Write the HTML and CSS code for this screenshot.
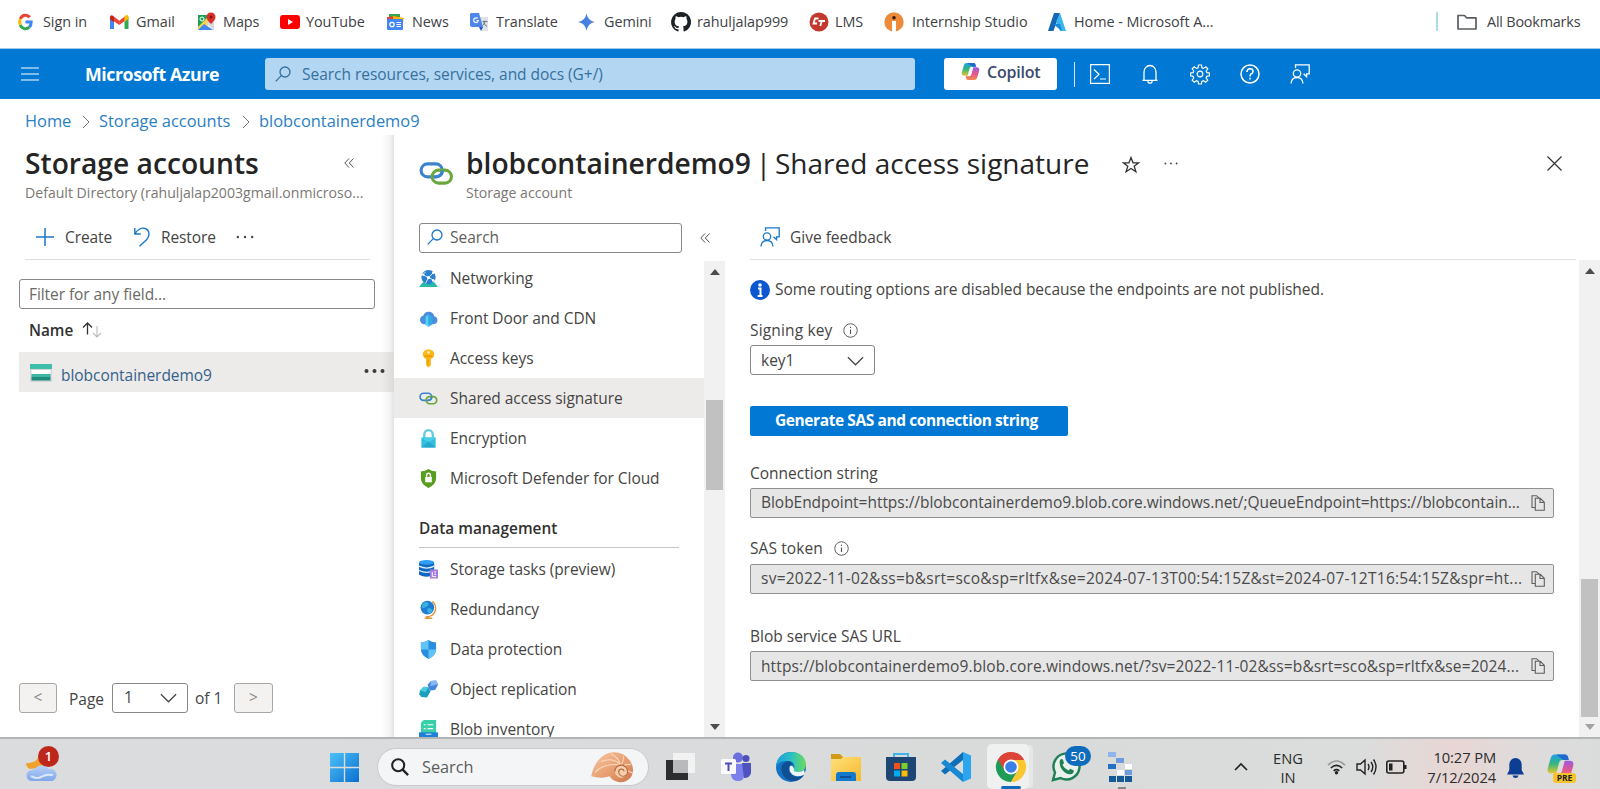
FILE: index.html
```html
<!DOCTYPE html>
<html lang="en">
<head>
<meta charset="utf-8">
<title>blobcontainerdemo9 - Microsoft Azure</title>
<link rel="stylesheet" href="styles.css">
</head>
<body>
<svg class="defs" width="0" height="0" aria-hidden="true">
  <defs>
    <linearGradient id="gBlue" x1="0" y1="0" x2="1" y2="1"><stop offset="0" stop-color="#4cc2f7"/><stop offset="1" stop-color="#0a6fd0"/></linearGradient>
    <linearGradient id="gCopA" x1="0" y1="0" x2="0" y2="1"><stop offset="0" stop-color="#1c9fe8"/><stop offset=".5" stop-color="#35b77c"/><stop offset="1" stop-color="#e8c62c"/></linearGradient>
    <linearGradient id="gCopB" x1="0" y1="0" x2="0" y2="1"><stop offset="0" stop-color="#9a5be0"/><stop offset=".5" stop-color="#e4568f"/><stop offset="1" stop-color="#f58a4a"/></linearGradient>
    <linearGradient id="gGem" x1="0" y1="0" x2="1" y2="0"><stop offset="0" stop-color="#4a80d8"/><stop offset=".6" stop-color="#3f83e0"/><stop offset="1" stop-color="#8e7bc4"/></linearGradient>
    <linearGradient id="gEdge" x1="0" y1="0" x2="1" y2="0"><stop offset="0" stop-color="#1b9fd9"/><stop offset=".5" stop-color="#2bbfc4"/><stop offset="1" stop-color="#6bdc5b"/></linearGradient>
    <linearGradient id="gShell" x1="0" y1="0" x2="1" y2="1"><stop offset="0" stop-color="#f8c9a4"/><stop offset=".6" stop-color="#e59a6c"/><stop offset="1" stop-color="#c9744a"/></linearGradient>
    <linearGradient id="gFolder" x1="0" y1="0" x2="1" y2="1"><stop offset="0" stop-color="#ffe07a"/><stop offset="1" stop-color="#f6b92e"/></linearGradient>
    <linearGradient id="gCloud" x1="0" y1="0" x2="0" y2="1"><stop offset="0" stop-color="#b9d3f8"/><stop offset="1" stop-color="#7fa6ea"/></linearGradient>
    <symbol id="person" viewBox="0 0 20 20">
      <g fill="none" stroke="currentColor" stroke-width="1.3"><circle cx="7" cy="9.500" r="3.700"/><path d="M1 19.500c.3-3.800 2.700-6 6-6s5.700 2.200 6 6M5.500 4V.8h13.700v9h-2.600v3l-3-3"/></g>
    </symbol>
    <symbol id="lens" viewBox="0 0 16 16"><g fill="none" stroke="currentColor" stroke-width="1.300"><circle cx="10" cy="6" r="5"/><path d="M6.300 9.600.7 15.400"/></g></symbol>
    <symbol id="links" viewBox="0 0 36 26"><rect x="2" y="3" width="22" height="13.500" rx="6.700" fill="none" stroke="#3b82d0" stroke-width="3.200"/><rect x="13.500" y="9.500" width="20" height="13.500" rx="6.700" fill="none" stroke="#69a63c" stroke-width="3.200"/><path d="M17 16.500q7-.3 7-6.700" fill="none" stroke="#3b82d0" stroke-width="3.200"/></symbol>
    <symbol id="chev" viewBox="0 0 18 10"><path d="M1 1l8 8 8-8" fill="none" stroke="currentColor" stroke-width="1.300"/></symbol>
    <symbol id="dbl" viewBox="0 0 10 10"><path d="M5 .5.800 5 5 9.500M9.500.5 5.300 5l4.200 4.500" fill="none" stroke="currentColor"/></symbol>
    <symbol id="info" viewBox="0 0 16 16"><circle cx="8" cy="8" r="7.200" fill="none" stroke="currentColor"/><path d="M8 6.800v5M8 4v1.400" stroke="currentColor" stroke-width="1.200"/></symbol>
    <symbol id="copy" viewBox="0 0 14 16"><path d="M4 12.500H1V.7h4.500l2.700 2.500M4.300 3.300h5l4 4v8h-9zM9 3.500v4h4.300" fill="none" stroke="currentColor" stroke-width="1.100"/></symbol>
    <symbol id="copilot" viewBox="0 0 20 20"><path d="M6 1h7q1.500 0 2 1.800l.6 2.200H11q-1.500 0-2 2L7 14.500H3.500Q0 14.500 1 10.500L3 3.500Q3.800 1 6 1z" fill="url(#gCopA)"/><path d="M7 1h6.500q1.300 0 1.800 1.500l.7 2.500h-4z" fill="#2068cf"/><path d="M13 5.500h3.500Q20 5.500 19 9.500l-2 7q-.8 2.500-3 2.500H7.500Q6 19 5.400 17l-.7-2H9q1.500 0 2-2z" fill="url(#gCopB)"/></symbol>
    <symbol id="dots" viewBox="0 0 20 4"><g fill="currentColor"><circle cx="2" cy="2" r="1.300"/><circle cx="10" cy="2" r="1.300"/><circle cx="18" cy="2" r="1.300"/></g></symbol>
  </defs>
</svg>

<nav class="bookmarks">
  <a class="bm"><svg viewBox="0 0 20 20"><g fill="none" stroke-width="3"><path d="M12.800 5.200A5.800 6.500 0 0 0 3.300 7" stroke="#ea4335"/><path d="M3.300 7a7 7 0 0 0 0 6" stroke="#fbbc05"/><path d="M3.300 13a5.800 6.500 0 0 0 9 2.200" stroke="#34a853"/><path d="M12.300 15.200Q14.200 13.500 14.200 10H8.500" stroke="#4285f4"/></g></svg><span>Sign in</span></a>
  <a class="bm"><svg viewBox="0 0 20 20"><path d="M0 5v12h4V8z" fill="#4285f4"/><path d="M14.500 8v9h4V5z" fill="#34a853"/><path d="M0 5q0-2.500 2.500-1.500l6.800 5.300V13L0 6.500z" fill="#ea4335"/><path d="M9.200 8.800l5.500-4.300V9l-5.500 4z" fill="#ea4335"/><path d="M14.500 4.300Q18.500 1.500 18.500 5v2l-4 2.800z" fill="#fbbc05"/><path d="M0 5v2.500l4 2.800V5L2 3.500z" fill="#c5221f"/></svg><span>Gmail</span></a>
  <a class="bm"><svg viewBox="0 0 20 20"><path d="M1 3h16v15H1z" fill="#e8eaed"/><path d="M1 3h12L1 16z" fill="#1e9e56"/><path d="M1 15l9-9 4 4-9 8H1z" fill="#fbd24b"/><path d="M1 18l6-6 9 6z" fill="#4285f4"/><path d="M9 10l8 8V8z" fill="#d5d9df"/><path d="M14 12Q9.500 8 9.500 5a4.500 4.500 0 0 1 9 0q0 3-4.500 7z" fill="#d93025"/><circle cx="14" cy="5" r="1.500" fill="#7d1713"/><circle cx="5" cy="7" r="2" fill="none" stroke="#fff"/></svg><span>Maps</span></a>
  <a class="bm"><svg viewBox="0 0 20 20"><rect y="3" width="20" height="14" rx="3" fill="#f00"/><path d="M8 7l5 3-5 3z" fill="#fff"/></svg><span>YouTube</span></a>
  <a class="bm"><svg viewBox="0 0 20 20"><path d="M3 2h11v6H3z" fill="#34a853"/><path d="M1 5l11-1v5H1z" fill="#ea4335"/><path d="M7 4l11 2-1 4H7z" fill="#fbbc05"/><rect x="1" y="7" width="16" height="11" rx="1" fill="#4285f4"/><circle cx="6" cy="12.500" r="2.200" fill="none" stroke="#fff" stroke-width="1.300"/><path d="M10.500 10.500h4.500M10.500 12.500h4.500M10.500 14.500h4.500" stroke="#fff"/></svg><span>News</span></a>
  <a class="bm"><svg viewBox="0 0 20 20"><path d="M8 5h10v14h-7z" fill="#dfe3e8"/><path d="M1 1h8l4 14H2q-2 0-2-2V2z" fill="#4f86ec"/><path d="M9 15h4l-2 4z" fill="#2a56c6"/><path d="M8 6H6.500a2.300 2.300 0 1 0 1.800 2.500H6.500" fill="none" stroke="#fff" stroke-width="1.200"/><path d="M12.500 9.500h5M15 8.500v1q0 3-2.500 4M13.500 10.500q1 2.500 3.500 4" fill="none" stroke="#6e7b87"/></svg><span>Translate</span></a>
  <a class="bm"><svg viewBox="0 0 20 20"><path d="M8.500 1.500Q9.800 8.700 17 10q-7.200 1.300-8.500 8.500Q7.200 11.300 0 10q7.200-1.300 8.500-8.500z" fill="url(#gGem)"/></svg><span>Gemini</span></a>
  <a class="bm"><svg viewBox="0 0 16 16"><path fill="#1c2126" d="M8 0a8 8 0 0 0-2.530 15.590c.4.070.55-.17.550-.38v-1.490c-2.230.49-2.700-.94-2.700-.94-.36-.93-.89-1.170-.89-1.170-.73-.5.050-.49.050-.49.810.06 1.230.83 1.230.83.720 1.230 1.880.87 2.340.67.070-.52.280-.87.510-1.070-1.780-.2-3.640-.89-3.640-3.950 0-.87.310-1.590.82-2.150-.08-.2-.36-1.020.08-2.120 0 0 .67-.21 2.200.82a7.600 7.600 0 0 1 4 0c1.530-1.040 2.200-.82 2.200-.82.440 1.100.16 1.920.08 2.120.51.560.82 1.270.82 2.150 0 3.070-1.870 3.750-3.650 3.950.290.250.54.730.54 1.480v2.190c0 .21.150.46.550.38A8 8 0 0 0 8 0z"/></svg><span>rahuljalap999</span></a>
  <a class="bm"><svg viewBox="0 0 20 20"><circle cx="10" cy="10" r="9.500" fill="#c23a2d"/><path d="M9.500 6.500H6L4.500 11.500H8M9.500 9h6.500M12.800 9l-1.500 5" fill="none" stroke="#fff" stroke-width="1.800"/></svg><span>LMS</span></a>
  <a class="bm intern"><svg viewBox="0 0 20 20"><circle cx="10" cy="10" r="9.700" fill="#ee8b3a"/><path d="M8 9h4v11H8z" fill="#fff"/><circle cx="10" cy="5.700" r="1.800" fill="#3a1d08"/></svg><span>Internship Studio</span></a>
  <a class="bm"><svg viewBox="0 0 20 20"><path d="M6 1h6L5.500 19H0z" fill="#1666b8"/><path d="M12 1l6 18h-6L8 10z" fill="#38b6ee"/><path d="M5 12h7l2 7z" fill="#1b86d6"/></svg><span>Home - Microsoft A...</span></a>
  <i class="bm-sep"></i>
  <a class="bm all"><svg viewBox="0 0 20 18"><path d="M1 2.500h6.500l2 2.300H19V16H1z" fill="none" stroke="#5a5d60" stroke-width="1.700" stroke-linejoin="round"/></svg><span>All Bookmarks</span></a>
</nav>

<header class="azure-bar">
  <svg class="burger" viewBox="0 0 18 14"><path d="M0 1h18M0 7h18M0 13h18" stroke="#fff" stroke-width="1.200"/></svg>
  <b class="brand">Microsoft Azure</b>
  <div class="global-search"><svg><use href="#lens"/></svg><span>Search resources, services, and docs (G+/)</span></div>
  <div class="copilot-btn"><svg><use href="#copilot"/></svg><span>Copilot</span></div>
  <i class="bar-sep"></i>
  <div class="bar-icons">
    <svg viewBox="0 0 20 20"><g fill="none" stroke="#fff" stroke-width="1.200"><path d="M.6.6h18.800v18.800H.6zM4 5.500l5 4.800-5 4.800M10 15h6"/></g></svg>
    <svg viewBox="0 0 20 20"><path d="M2.500 16.300h15M4 16v-8a6 6.500 0 0 1 12 0v8M8 16.500v1q0 1.700 2 1.700t2-1.700v-1" fill="none" stroke="#fff" stroke-width="1.300"/></svg>
    <svg viewBox="0 0 20 20"><g fill="none" stroke="#fff" stroke-width="1.200"><circle cx="10" cy="10" r="2.800"/><path d="M8.500 1h3l.4 2.700 1.700.7 2.200-1.600 2 2-1.600 2.200.7 1.700 2.500.3v2.800l-2.600.5-.7 1.700 1.600 2.200-2 2-2.200-1.500-1.700.7-.4 2.600h-2.900l-.4-2.600-1.700-.7-2.200 1.500-2-2 1.500-2.200-.7-1.700L.6 11.800V9l2.500-.3.700-1.700-1.600-2.200 2-2 2.200 1.600 1.700-.7z"/></g></svg>
    <svg viewBox="0 0 20 20"><g fill="none" stroke="#fff" stroke-width="1.500"><circle cx="10" cy="10" r="9"/><path d="M7 8q0-3.200 3-3.200t3 2.700Q13 9.200 11 10q-1 .6-1 2.500"/><path d="M10 13.700v1.800"/></g></svg>
    <svg class="white"><use href="#person"/></svg>
  </div>
</header>

<main class="portal">
  <div class="crumbs"><a class="c1">Home</a><svg viewBox="0 0 8 14"><path d="M1 1l6 6-6 6" fill="none" stroke="#777"/></svg><a class="c2">Storage accounts</a><svg viewBox="0 0 8 14"><path d="M1 1l6 6-6 6" fill="none" stroke="#777"/></svg><a class="c3">blobcontainerdemo9</a></div>

  <div class="columns">
    <section class="list-pane">
      <div class="list-title"><h1>Storage accounts</h1><svg class="collapse"><use href="#dbl"/></svg></div>
      <p class="directory">Default Directory (rahuljalap2003gmail.onmicroso...</p>
      <div class="list-tools">
        <svg class="plus" viewBox="0 0 18 18"><path d="M9 0v18M0 9h18" stroke="#1b77c8" stroke-width="1.500"/></svg><span class="t-create">Create</span>
        <svg class="undo" viewBox="0 0 16 20"><path d="M.800 1v6h6M1 6.500Q5 .8 10 1.200q5 .8 5 6 0 2.800-2.500 5.500L5.500 19.300" fill="none" stroke="#1b77c8" stroke-width="1.400"/></svg><span class="t-restore">Restore</span>
        <svg class="more"><use href="#dots"/></svg>
      </div>
      <div class="filter">Filter for any field...</div>
      <div class="col-head"><b>Name</b><svg viewBox="0 0 20 16"><path d="M5.500 12.500V1M1 5.500 5.500 1 10 5.500" fill="none" stroke="#333" stroke-width="1.300"/><path d="M15 4v11M11 11l4 4 4-4" fill="none" stroke="#bbb" stroke-width="1.100"/></svg></div>
      <div class="row">
        <svg class="stor" viewBox="0 0 22 18"><path fill="#d3d7d8" d="M0 4h22v14H0z"/><path fill="#3dbfab" d="M0 0h22v5H0z"/><path fill="#fff" d="M1.500 6h19v4h-19z"/><path fill="#3fb7a6" d="M1.500 10h19v3h-19z"/><path fill="#1f8d7e" d="M1.500 13h19v3.500h-19z"/></svg>
        <a>blobcontainerdemo9</a>
        <svg class="row-more" viewBox="0 0 20 4"><g fill="#3a3a3a"><circle cx="2" cy="2" r="2"/><circle cx="10" cy="2" r="2"/><circle cx="18" cy="2" r="2"/></g></svg>
      </div>
      <div class="pager"><span class="pg prev">&lt;</span><span class="pg-label">Page</span><span class="pg-sel">1<svg><use href="#chev"/></svg></span><span class="pg-of">of 1</span><span class="pg next">&gt;</span></div>
    </section>

    <section class="blade">
      <div class="blade-head">
        <svg class="blade-icon"><use href="#links"/></svg>
        <div class="blade-titles">
          <h2><b>blobcontainerdemo9</b><i>|</i><span>Shared access signature</span></h2>
          <p>Storage account</p>
        </div>
        <svg class="star" viewBox="0 0 18 18"><path d="M9 1.500l2 5.300h5.600l-4.400 3.400 1.700 5.600L9 12.500l-4.900 3.300 1.700-5.600L1.400 6.800H7z" fill="none" stroke="#333" stroke-width="1.300"/></svg>
        <svg class="head-more"><use href="#dots"/></svg>
        <svg class="close" viewBox="0 0 16 16"><path d="M.5.5l15 15M15.500.5l-15 15" stroke="#333" stroke-width="1.300"/></svg>
      </div>
      <div class="blade-body">
        <aside class="menu">
          <div class="menu-top"><div class="menu-search"><svg><use href="#lens"/></svg><span>Search</span></div><svg class="collapse"><use href="#dbl"/></svg></div>
          <div class="menu-scroll">
            <ul>
              <li><svg viewBox="0 0 20 20"><path d="M0 19l4-5h12l4 5z" fill="#28b9a6"/><circle cx="10" cy="8.500" r="7.500" fill="#2b7fd0"/><path d="M4 6l6 3 5-5M10 9l-3 6M10 9l6 3M4 6l3-3" stroke="#d5f1ff" fill="none"/><g fill="#fff"><circle cx="10" cy="9" r="1.700"/><circle cx="4.500" cy="6" r="1.300"/><circle cx="15" cy="4" r="1.300"/><circle cx="15" cy="12" r="1.300"/></g></svg><span>Networking</span></li>
              <li><svg viewBox="0 0 20 20"><path d="M5 16a4.600 4.600 0 0 1-.5-9A6 6 0 0 1 16 7.500 4.300 4.300 0 0 1 15.500 16z" fill="#4d8de0"/><path d="M7 8l3-2v13l-3-2z" fill="#4fd7f2"/><path d="M10 6l4 2v8l-4 3z" fill="#35a8e4"/></svg><span>Front Door and CDN</span></li>
              <li><svg viewBox="0 0 20 20"><path d="M10 .5c4 0 6 2.300 6 5s-1.500 4-3.500 5v6.500L10 19.500 7.500 17v-6.500C5.500 9.500 4 8 4 5.500s2-5 6-5z" fill="#fcb714"/><circle cx="10" cy="3.500" r="1.500" fill="#fff3b8"/><path d="M6 7.500h8M9.500 11v6" stroke="#e08b00"/></svg><span>Access keys</span></li>
              <li class="on"><svg><use href="#links"/></svg><span>Shared access signature</span></li>
              <li><svg viewBox="0 0 20 20"><path d="M5.500 10V6a4.500 4.800 0 0 1 9 0v4" fill="none" stroke="#5ccbe0" stroke-width="2.400"/><path d="M2.500 9h15v10.500h-15z" fill="#32bedd"/><path d="M2.500 9h15L10 14.500z" fill="#47cfe8"/><path d="M2.500 19.500L10 13l7.500 6.500z" fill="#27a9cd"/></svg><span>Encryption</span></li>
              <li><svg viewBox="0 0 20 20"><path d="M10 0q3 2.500 8 2.500V10q0 6-8 10-8-4-8-10V2.500Q7 2.500 10 0z" fill="#5a9e20"/><path d="M6.500 8.500h7v5.500h-7z" fill="#fff"/><path d="M8 9V6.500a2 2 0 0 1 4 0V9" fill="none" stroke="#fff" stroke-width="1.500"/></svg><span>Microsoft Defender for Cloud</span></li>
            </ul>
            <h3>Data management</h3>
            <ul>
              <li><svg viewBox="0 0 20 20"><path d="M0 2.500Q8 6 16 2.500v13Q8 20 0 15.500z" fill="#1166c0"/><ellipse cx="8" cy="2.500" rx="8" ry="2.500" fill="#2f9df0"/><path d="M0 6.500q8 4 16 0M0 11q8 4 16 0" stroke="#dff0ff" fill="none" stroke-width="1.300"/><rect x="11.500" y="10" width="8.500" height="9.500" fill="#a67be0"/><path d="M14 12.500v5h4M16 12.500h2M16 15h2" stroke="#fff" fill="none"/></svg><span>Storage tasks (preview)</span></li>
              <li><svg viewBox="0 0 20 20"><circle cx="8.800" cy="8" r="7.200" fill="#1f7ed2"/><path d="M5 3q4-2 5 1 0 3-3 3-2 2-4 1 0-3 2-5zM9 9q4-1 5 2-1 3-4 3-2-2-1-5z" fill="#38b4dc"/><path d="M14 1.500a9 9 0 0 1-7 16M10 17v2M6 19.300h8" fill="none" stroke="#e0963c" stroke-width="1.500"/></svg><span>Redundancy</span></li>
              <li><svg viewBox="0 0 20 20"><path d="M10 0q3 2.500 8 2.500V10q0 6-8 10-8-4-8-10V2.500Q7 2.500 10 0z" fill="#2a8de0"/><path d="M10 0v10H2V2.500Q7 2.500 10 0z" fill="#5fc4f5"/><path d="M10 10h8q0 6-8 10z" fill="#5fc4f5"/></svg><span>Data protection</span></li>
              <li><svg viewBox="0 0 20 20"><path d="M9 5l3.500-4 5.500-.5 2 4.500-3 5.500-5.500 .5z" fill="#4385df"/><path d="M12.500 1l5.500-.5 2 4-8 2z" fill="#86b8f2"/><path d="M1 11l4-4 5 .5 2 4.500-3.500 6.500-6-.5L.3 15z" fill="#1b9fbb"/><path d="M1 11l4-4 5 .5L7 13z" fill="#46cbe0"/></svg><span>Object replication</span></li>
              <li><svg viewBox="0 0 20 20"><path d="M5 0h13v14H2V3z" fill="#39cfa8"/><path d="M5 5h2M9 5h6M5 9h2M9 9h6" stroke="#fff" stroke-width="1.300"/><path d="M0 13h20v6H0z" fill="#1f7fd6"/><path d="M7 15h6" stroke="#bfe3ff" stroke-width="1.300"/></svg><span>Blob inventory</span></li>
            </ul>
          </div>
        </aside>
        <div class="vbar menu-bar"><i class="tri up"></i><i class="thumb"></i><i class="tri down"></i></div>
        <article class="content">
          <div class="feedback"><svg><use href="#person"/></svg><span>Give feedback</span></div>
          <p class="notice"><svg viewBox="0 0 20 20"><circle cx="10" cy="10" r="10" fill="#0b57d0"/><circle cx="10" cy="5" r="1.800" fill="#fff"/><path d="M8 8.500h2.500V16M7.700 16h4.800" stroke="#fff" stroke-width="2" fill="none"/></svg><span>Some routing options are disabled because the endpoints are not published.</span></p>
          <div class="label l1"><span>Signing key</span><svg><use href="#info"/></svg></div>
          <div class="select">key1<svg><use href="#chev"/></svg></div>
          <div class="generate"><span>Generate SAS and connection string</span></div>
          <div class="label l2"><span>Connection string</span></div>
          <div class="field f1"><span>BlobEndpoint=https://blobcontainerdemo9.blob.core.windows.net/;QueueEndpoint=https://blobcontain...</span><svg><use href="#copy"/></svg></div>
          <div class="label l3"><span>SAS token</span><svg><use href="#info"/></svg></div>
          <div class="field f2"><span>sv=2022-11-02&amp;ss=b&amp;srt=sco&amp;sp=rltfx&amp;se=2024-07-13T00:54:15Z&amp;st=2024-07-12T16:54:15Z&amp;spr=ht...</span><svg><use href="#copy"/></svg></div>
          <div class="label l4"><span>Blob service SAS URL</span></div>
          <div class="field f3"><span>https://blobcontainerdemo9.blob.core.windows.net/?sv=2022-11-02&amp;ss=b&amp;srt=sco&amp;sp=rltfx&amp;se=2024...</span><svg><use href="#copy"/></svg></div>
        </article>
        <div class="vbar page-bar"><i class="tri up"></i><i class="thumb"></i><i class="tri down light"></i></div>
      </div>
    </section>
  </div>
</main>

<footer class="taskbar">
  <div class="weather"><svg viewBox="0 0 36 38"><path d="M14 8q0 8-6 10-4 1.500-7 1 0 4 4 6l15-2V10z" fill="#f0a02c"/><path d="M7 37a5.500 5.500 0 0 1 0-11 5 5 0 0 1 3-1 8 8 0 0 1 13.500 0A6 6 0 0 1 27 37z" fill="url(#gCloud)"/><path d="M6 32q6 4 12 0 5-2 10-1" stroke="#dbe8fc" stroke-width="2" fill="none"/></svg><b>1</b></div>
  <svg class="start" viewBox="0 0 30 30"><path d="M0 0h14.300v14.300H0zM15.700 0H30v14.300H15.700zM0 15.700h14.300V30H0zM15.700 15.700H30V30H15.700z" fill="url(#gBlue)"/></svg>
  <div class="os-search"><svg class="mag" viewBox="0 0 20 20"><circle cx="8" cy="8" r="6.700" fill="none" stroke="#222" stroke-width="2.300"/><path d="M13 13l6 6" stroke="#222" stroke-width="2.600"/></svg><span>Search</span>
    <svg class="shell" viewBox="0 0 44 32"><path d="M0 25Q4 6 18 1q14-3 22 8 6 9 1 17-5 6-13 5-7-2-9-6-8 3-19 0z" fill="url(#gShell)"/><path d="M4 21Q12 12 28 13M10 10q12-5 20 3M20 2q8 3 10 11M33 4q1 5-2 9M41 13q-5-1-9 2M43 22q-5-3-9-4" stroke="#f9d9bd" stroke-width="1.100" fill="none"/><circle cx="31" cy="20" r="6.500" fill="#f3cfae"/><path d="M24.500 20a6.500 6.500 0 0 1 13 0 4.500 4.500 0 0 1-9 1 2.700 2.700 0 0 1 5.500-1" fill="none" stroke="#b9693f" stroke-width="1.200"/></svg></div>
  <div class="apps">
    <div><svg viewBox="0 0 30 30"><path d="M0 8h22v20H0z" fill="#2c2d2e"/><path d="M7 1h22v20H7z" fill="#fff" opacity=".65"/><path d="M7 8h15v13H7z" fill="#b9babb"/></svg></div>
    <div><svg viewBox="0 0 30 30"><circle cx="17" cy="5.500" r="5" fill="#6b6fe0"/><circle cx="25" cy="6.500" r="3.500" fill="#4c50b8"/><path d="M10 12h13v12q0 5-6 5t-7-6z" fill="#7b80ec"/><path d="M21 11h9v10q-1 5-7 5z" fill="#4e53bd"/><rect y="7" width="15" height="15" rx="1.500" fill="#fbfbff"/><path d="M4 11.500h7M7.500 11.500v7.500" stroke="#4b4fb5" stroke-width="2"/></svg></div>
    <div><svg viewBox="0 0 30 30"><circle cx="15" cy="15" r="15" fill="#1273c4"/><path d="M0 15C1-5 30-4 30 13q-1 7-8 7-5 0-4-3 2-7-6-8Q3 8 0 15z" fill="url(#gEdge)"/><path d="M12 9Q3 12 6 21q4 9 13 8 6-1 9-6-6 4-12 0-5-4-2-9 1-2 3-2-2-3-5-3z" fill="#114f94"/><path d="M18 17q-1 3 4 3 4 0 6-2l1 4q-6 4-12 1-5-4-3-9 3-1 4 3z" fill="#eef5f8"/></svg></div>
    <div><svg viewBox="0 0 30 30"><path d="M0 2h9l3 3h17v8H0z" fill="#d39a16"/><path d="M0 7l10 0 2-2h18v24H0z" fill="url(#gFolder)"/><path d="M5 29v-6q0-3 3-3h14q3 0 3 3v6z" fill="#1579cb"/><path d="M9 25h11" stroke="#0d4f93" stroke-width="1.800"/></svg></div>
    <div><svg viewBox="0 0 30 30"><path d="M8 7V2h14v5" fill="none" stroke="#3fb4ea" stroke-width="2"/><path d="M0 5h30v20q0 4-4 4H4q-4 0-4-4z" fill="#1d4674"/><path d="M8 11h6v6H8z" fill="#f1511b"/><path d="M15.500 11h6v6h-6z" fill="#80cc28"/><path d="M8 18.500h6v6H8z" fill="#00adef"/><path d="M15.500 18.500h6v6h-6z" fill="#fbbc09"/></svg></div>
    <div><svg viewBox="0 0 30 30"><path d="M22 0l8 3.500v23L22 30z" fill="#2aa5ee"/><path d="M22 0v8L4 22.500l-4-3.500z" fill="#0f6fb8"/><path d="M22 30v-8L4 7.500 0 11z" fill="#1988d3"/></svg></div>
    <div class="active"><svg viewBox="0 0 30 30"><path d="M15 15L2 7.500A15 15 0 0 1 28 7.500z" fill="#db4437"/><path d="M15 15L2 7.500A15 15 0 0 0 15 30l6.500-11z" fill="#1e9b54"/><path d="M28 7.500H15l6.500 11.500L15 30A15 15 0 0 0 28 7.500z" fill="#fbc72f"/><path d="M2 7.500l6.500 11L15 8h13A15 15 0 0 0 2 7.500z" fill="#db4437"/><circle cx="15" cy="15" r="7.500" fill="#fff"/><circle cx="15" cy="15" r="5.800" fill="#3b7ee8"/></svg></div>
    <div class="wa"><svg viewBox="0 0 30 30"><path d="M2 28l2-7.500A13 13 0 1 1 9.500 26z" fill="#e8f1ec" stroke="#1f7f55" stroke-width="2.400"/><path d="M9 8q2-2 3 0l1 3-1.500 2q2 4 6 5.500l1.800-1.700 3.200 1.500q1 3-3 4-4 .5-8-4-4-5-2.500-10.300z" fill="#1f7f55"/></svg><b>50</b></div>
    <div class="idle"><svg viewBox="0 0 30 30"><g><path fill="#8fb5ea" d="M2 0h8v5H2z"/><path fill="#6d9be0" d="M10 6h8v5h-8z"/><path fill="#2271c4" d="M2 12h8v5H2z"/><path fill="#fff" d="M19 12h7v5h-7zM11 18h7v5h-7z"/><path fill="#6d9be0" d="M19 18h7v5h-7z"/><path fill="#155a96" d="M3 24h7v6H3zM11 24h7v6h-7zM19 24h7v6h-7z"/></g></svg></div>
  </div>
  <div class="tray">
    <svg class="up-chev" viewBox="0 0 14 8"><path d="M1 7l6-6 6 6" fill="none" stroke="#222" stroke-width="1.700"/></svg>
    <div class="lang">ENG<br>IN</div>
    <svg class="wifi" viewBox="0 0 20 16"><g fill="none" stroke="#222" stroke-width="1.600"><path d="M1 6Q10-2.500 19 6" stroke="#999"/><path d="M4 9q6-5.500 12 0M7 12q3-2.500 6 0"/></g><circle cx="10" cy="14" r="1.800" fill="#222"/></svg>
    <svg class="sound" viewBox="0 0 21 18"><path d="M1 6h3.500L9 2v14l-4.500-4H1zM12 6q2 3 0 6M15 4q3.500 5 0 10M17.500 1.500q5 7.500 0 15" fill="none" stroke="#222" stroke-width="1.400"/></svg>
    <svg class="batt" viewBox="0 0 21 14"><rect x=".8" y="1" width="17" height="12" rx="2" fill="none" stroke="#222" stroke-width="1.600"/><path d="M3 3.500h3.500v7H3zM18 5h2.500v4H18z" fill="#222"/></svg>
    <div class="clock">10:27 PM<br>7/12/2024</div>
    <svg class="bell" viewBox="0 0 17 20"><path d="M8.500 0q6 .5 6.200 7v5l2.300 4.500H0L2.300 12V7Q2.500.5 8.500 0zM5.500 17.500h6q-.5 2.500-3 2.500t-3-2.500z" fill="#0c3f94"/></svg>
    <div class="pre"><svg preserveAspectRatio="none"><use href="#copilot"/></svg><b>PRE</b></div>
  </div>
</footer>
</body>
</html>
```

FILE: styles.css
```css
* { box-sizing: border-box; }
html, body { margin: 0; height: 789px; overflow: hidden; }
body {
  width: 1600px; display: flex; flex-direction: column; background: #fff; color: #454443;
  font: 15.5px/20px "Open Sans", "Noto Sans", sans-serif;
}
h1, h2, h3, p, ul { margin: 0; padding: 0; list-style: none; }
svg { display: block; flex: none; overflow: visible; }
span, a, b { white-space: nowrap; }
i { font-style: normal; }
.defs { position: absolute; }

.bookmarks {
  flex: none; height: 49px; padding: 0 0 5px 17px; border-bottom: 1px solid #9cc9ea;
  display: grid; align-items: center; font-size: 14.4px; letter-spacing: -.05px;
  grid-template-columns: 93px 87px 83px 106px 84px 108px 93px 138px 75px 164px 388px 21px 126px;
}
.bm { display: flex; align-items: center; gap: 6px; color: #404245; }
.bm svg { width: 20px; height: 20px; }
.bm.intern { gap: 8px; letter-spacing: 0; }
.bm.all { gap: 10px; letter-spacing: -.2px; }
.bm-sep { width: 2px; height: 19px; background: #a9dbe8; }

.azure-bar { flex: none; height: 50px; background: #0078d4; display: flex; align-items: center; color: #fff; padding-left: 21px; }
.burger { width: 18px; height: 14px; }
.brand { width: 180px; margin-left: 46px; font-size: 17.8px; font-weight: 700; letter-spacing: -.45px; }
.global-search { width: 650px; height: 32px; border-radius: 3px; background: #b3d6f2; color: #35709f; display: flex; align-items: center; padding-left: 10px; letter-spacing: -.03px; }
.global-search svg { width: 16px; height: 16px; margin-right: 11px; }
.copilot-btn { width: 113px; height: 32px; margin-left: 29px; border-radius: 3px; background: #fff; color: #3b4a70; display: flex; gap: 7px; padding: 4px 0 0 17px; font-weight: 600; font-size: 16px; letter-spacing: -.2px; }
.copilot-btn svg { width: 19px; height: 19px; }
.bar-sep { width: 1px; height: 25px; margin: 0 15px 0 17px; background: #d6eaf9; }
.bar-icons { display: flex; gap: 30px; }
.bar-icons svg { width: 20px; height: 20px; }
.white { color: #fff; }

.portal { height: 638px; display: flex; flex-direction: column; }
.crumbs { flex: none; height: 36px; padding: 12px 0 0 25px; display: flex; color: #2a80c4; font-size: 16.4px; }
.crumbs svg { width: 8px; height: 14px; margin: 4px 9px 0; }
.c1 { width: 48px; } .c2 { width: 134px; }
.c1, .c2, .c3 { letter-spacing: 0; }
.columns { display: flex; height: 602px; }

.list-pane { width: 394px; padding-left: 19px; display: flex; flex-direction: column; background: linear-gradient(to right, transparent 381px, #f5f5f5 389px, #e3e3e3 394px); }
.list-title { height: 46px; padding: 8px 0 0 6px; display: flex; color: #242424; }
.list-title h1 { width: 319px; font-size: 28.2px; line-height: 40px; font-weight: 600; letter-spacing: 0; white-space: nowrap; }
.collapse { width: 10px; height: 10px; color: #555; margin-top: 15px; }
.directory { padding: 2px 0 0 6px; height: 34px; font-size: 14.1px; color: #7b7773; white-space: nowrap; }
.list-tools { margin-left: 6px; width: 345px; height: 45px; border-bottom: 1px solid #dedede; display: flex; align-items: center; padding-left: 11px; letter-spacing: -.1px; }
.plus { width: 18px; height: 18px; }
.undo { width: 16px; height: 20px; }
.t-create { margin-left: 11px; width: 69px; }
.t-restore { margin-left: 11px; width: 75px; }
.more { width: 18px; height: 4px; color: #444; }
.filter { width: 356px; height: 30px; margin-top: 19px; border: 1px solid #8a8886; border-radius: 3px; background: #fff; padding: 4px 9px; color: #6b6966; letter-spacing: -.07px; }
.col-head { height: 43px; padding: 11px 0 0 10px; display: flex; color: #323130; }
.col-head b { width: 53px; font-weight: 600; font-size: 15.3px; }
.col-head svg { width: 20px; height: 16px; margin-top: 2px; }
.row { height: 40px; background: linear-gradient(to right, #edebe9 363px, #dcdad9 375px); display: flex; align-items: center; padding-left: 11px; }
.row a { color: #34618a; width: 303px; margin-left: 9px; padding-top: 5px; letter-spacing: -.05px; }
.row-more { width: 21px; height: 4px; margin-bottom: 2px; }
.stor { width: 22px; height: 18px; margin-top: 2px; }
.pager { margin-top: 291px; display: flex; align-items: center; height: 30px; color: #444; }
.pg { width: 38px; height: 30px; border: 1px solid #a9a7a5; border-radius: 3px; background: #f3f2f1; color: #8c8a88; text-align: center; line-height: 26px; }
.pg.next { width: 39px; }
.pg-label { width: 42px; margin-left: 12px; margin-right: 1px; padding-top: 1px; }
.pg-sel { width: 76px; height: 30px; border: 1px solid #8a8886; border-radius: 3px; background: #fff; padding: 3px 10px 0 11px; display: flex; justify-content: space-between; }
.pg-sel svg, .select svg { width: 17px; height: 10px; margin-top: 6px; color: #444; }
.pg-of { width: 39px; margin-left: 7px; }

.blade { width: 1206px; height: 602px; background: #fff; }
.blade-head { height: 80px; display: flex; padding-left: 25px; }
.blade-icon { width: 35px; height: 25px; margin-top: 26px; }
.blade-titles { margin-left: 12px; width: 656px; padding-top: 8px; }
.blade-titles h2 { display: flex; height: 40px; font-size: 28px; line-height: 40px; color: #242424; font-weight: 400; }
.blade-titles h2 b { width: 286px; font-weight: 600; font-size: 28.2px; letter-spacing: 0; }
.blade-titles h2 i { width: 23px; text-align: center; }
.blade-titles p { font-size: 14.1px; color: #7b7773; }
.star { width: 18px; height: 18px; margin-top: 21px; }
.head-more { width: 14px; height: 3px; margin: 27px 0 0 24px; color: #444; }
.close { width: 15px; height: 15px; margin: 21px 0 0 369px; }
.blade-body { height: 522px; display: flex; }
.menu { width: 310px; display: flex; flex-direction: column; }
.menu-top { height: 43px; padding: 8px 0 0 25px; display: flex; }
.menu-top .collapse { margin: 10px -6px 0 18px; }
.menu-search { width: 263px; height: 30px; border: 1px solid #8a8886; border-radius: 3px; display: flex; align-items: center; color: #605e5c; padding: 0 0 2px 7px; }
.menu-search svg { width: 16px; height: 16px; margin-right: 7px; color: #1b77c8; }
.menu-scroll { height: 479px; overflow: hidden; }
.menu li { height: 40px; display: flex; align-items: center; gap: 12px; padding-left: 25px; letter-spacing: -.06px; }
.menu li svg { width: 19px; height: 19px; }
.menu li.on { background: #edebe9; }
.menu h3 { margin: 20px 25px 1px; height: 30px; border-bottom: 1px solid #c8c6c4; font-size: 15.4px; font-weight: 600; color: #323130; line-height: 22px; white-space: nowrap; }

.vbar { width: 21px; background: #f1f1f1; display: flex; flex-direction: column; align-items: center; }
.menu-bar { margin-top: 46px; height: 476px; }
.page-bar { margin-top: 45px; height: 477px; }
.tri { border: 5px solid transparent; border-top: 0; border-bottom: 6px solid #4d4d4d; margin-top: 8px; }
.tri.down { border-bottom: 0; border-top: 6px solid #4d4d4d; margin-top: auto; margin-bottom: 7px; }
.tri.light { border-top-color: #a3a3a3; }
.thumb { width: 17px; background: #c1c1c1; }
.menu-bar .thumb { height: 90px; margin-top: 125px; }
.page-bar .thumb { height: 138px; margin-top: 305px; }

.content { width: 854px; padding-left: 25px; }
.feedback { width: 826px; height: 45px; border-bottom: 1px solid #e1dfdd; display: flex; align-items: center; padding-left: 10px; gap: 10px; }
.feedback svg { width: 20px; height: 20px; color: #1b77c8; }
.notice { display: flex; gap: 5px; height: 42px; padding-top: 20px; letter-spacing: -.05px; }
.notice svg { width: 20px; height: 20px; }
.notice span { line-height: 18px; }
.label { display: flex; height: 20px; gap: 11px; align-items: center; }
.label span { padding-bottom: 1px; }
.label svg { width: 15px; height: 15px; color: #555; }
.l1 { margin-top: 18px; letter-spacing: .15px; }
.select { width: 125px; height: 30px; margin-top: 5px; border: 1px solid #8a8886; border-radius: 3px; padding: 4px 10px; display: flex; justify-content: space-between; }
.generate { width: 318px; height: 30px; margin-top: 31px; border-radius: 2px; background: #0078d4; color: #fff; font-weight: 700; padding: 4px 25px; letter-spacing: -.41px; }
.l2 { margin-top: 27px; }
.field { width: 804px; height: 30px; margin-top: 5px; border: 1px solid #939190; border-radius: 2px; background: #e6e6e6; padding: 3px 8px 0 10px; display: flex; justify-content: space-between; color: #4a4a4a; }
.field svg { width: 14px; height: 16px; margin-top: 3px; color: #605e5c; }
.f1 { letter-spacing: -.04px; }
.l3 { margin-top: 20px; letter-spacing: .1px; }
.f2 { margin-top: 6px; letter-spacing: .25px; }
.l4 { margin-top: 32px; }
.f3 { letter-spacing: .11px; padding-top: 4px; }
.f3 svg { margin-top: 2px; }

.taskbar { flex: none; height: 52px; border-top: 2px solid #b3b4b5; display: flex; background: linear-gradient(to right, #dbdcde, #d9dbdb 65%, #dadddc 85%, #e8d6d4 91%, #dfdbdb 95%, #dadcdc); }
.weather { position: relative; width: 305px; padding-left: 25px; }
.weather svg { width: 36px; height: 38px; margin-top: 5px; }
.weather b { position: absolute; left: 38px; top: 7px; width: 21px; height: 21px; border-radius: 50%; background: #bd271c; color: #fff; font-size: 13px; font-weight: 600; text-align: center; }
.start { width: 29px; height: 29px; margin: 14px 18px 0 25px; }
.os-search { width: 272px; height: 38px; margin-top: 9px; border-radius: 19px; background: #f4f5f6; border: 1px solid #c9cacb; display: flex; align-items: center; padding-left: 13px; color: #5c5c5c; font-size: 16.3px; }
.mag { width: 18px; height: 18px; margin-right: 13px; }
.os-search span { width: 169px; }
.shell { width: 43px; height: 31px; }
.apps { display: flex; margin-left: 4px; }
.apps > div { position: relative; width: 55px; height: 50px; padding: 13px 0 0 12.5px; }
.apps svg { width: 30px; height: 30px; position: relative; }
.apps .active::before { content: ""; position: absolute; left: 4px; top: 5px; width: 42px; height: 45px; border-radius: 5px; background: #eff0f0; box-shadow: 5px 0 0 -1px #e6e7e7; }
.apps .active::after { content: ""; position: absolute; left: 18px; bottom: 0; width: 20px; height: 3px; border-radius: 2px; background: #0f6cbd; }
.apps .idle::after { content: ""; position: absolute; left: 25px; bottom: 0; width: 8px; height: 2px; background: #888; }
.wa b { position: absolute; left: 27px; top: 7px; width: 26px; height: 20px; border-radius: 10px; background: #0f6cbd; color: #fff; font-size: 13.5px; font-weight: 400; text-align: center; }
.tray { display: flex; color: #2c2c2c; font-size: 14.7px; padding-left: 86px; line-height: 20px; }
.up-chev { width: 14px; height: 8px; margin-top: 24px; }
.lang { width: 44px; margin: 10px 0 0 18px; text-align: center; line-height: 19px; }
.wifi { width: 19px; height: 16px; margin: 20px 0 0 17px; }
.sound { width: 21px; height: 18px; margin: 19px 0 0 10px; }
.batt { width: 21px; height: 14px; margin: 21px 0 0 9px; }
.clock { width: 80px; text-align: right; margin: 8px 0 0 9px; white-space: nowrap; letter-spacing: -.1px; }
.bell { width: 17px; height: 20px; margin: 19px 0 0 11px; }
.pre { position: relative; width: 30px; height: 30px; margin: 14px 0 0 22px; }
.pre svg { width: 29px; height: 28px; }
.pre b { position: absolute; left: 7px; bottom: 0; width: 23px; height: 10px; border-radius: 3px; background: #f5c32c; color: #222; font-size: 8.5px; line-height: 10px; font-weight: 700; text-align: center; }
```
